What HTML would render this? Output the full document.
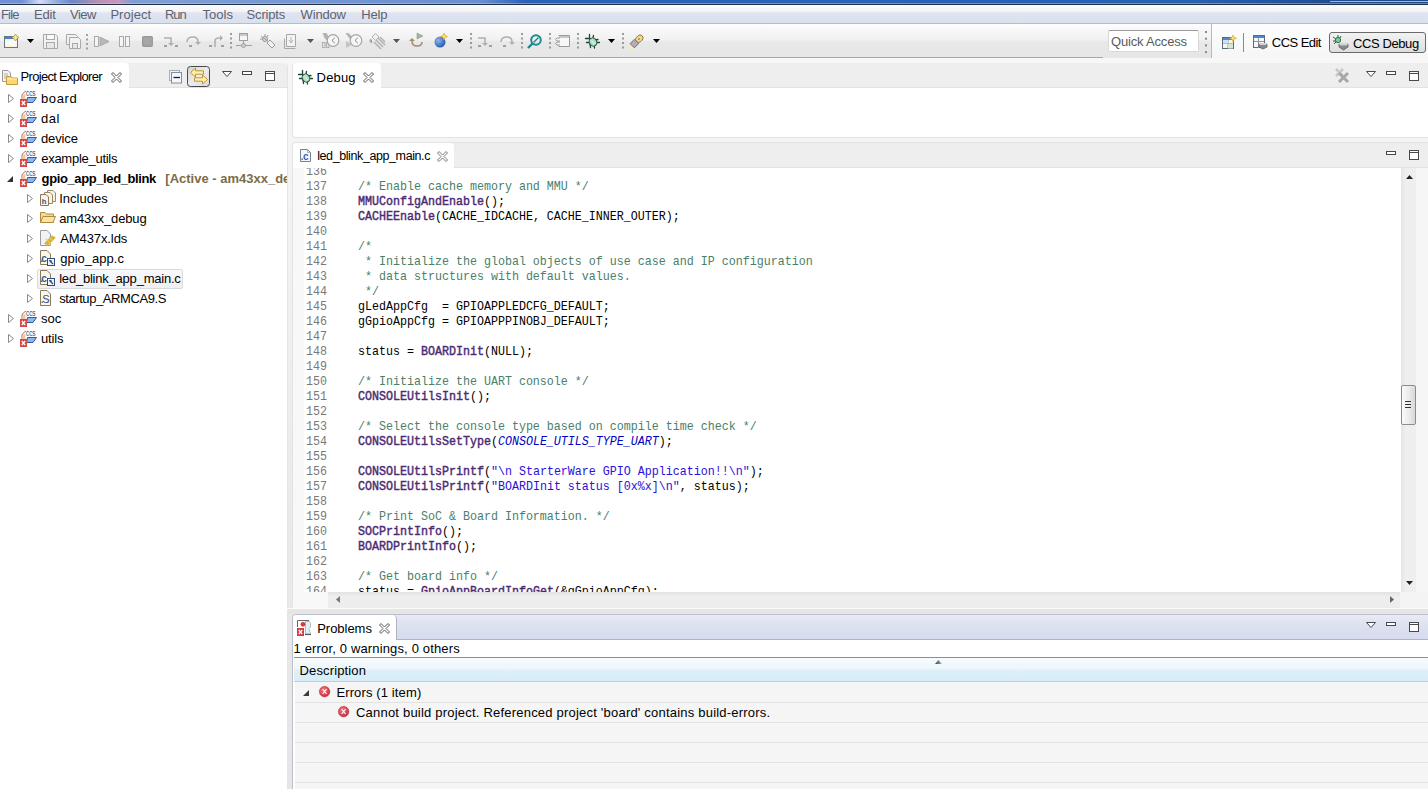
<!DOCTYPE html><html><head><meta charset="utf-8"><style>
*{margin:0;padding:0;box-sizing:border-box}
html,body{width:1428px;height:789px;overflow:hidden;background:linear-gradient(#f6f6f6 60px,#f0f0f0 300px,#eaeaea 500px,#e6e6e8 789px);font-family:"Liberation Sans",sans-serif;font-size:12px;color:#000}
.a{position:absolute}
.t{position:absolute;white-space:pre;line-height:1}
svg{overflow:visible}
#title{left:0;top:0;width:1428px;height:5px;background:linear-gradient(90deg,#6f90d2 0px,#6f90d2 22px,#d6ddf5 40px,#8aa6dc 58px,#6a88c8 72px,#b890b0 98px,#c898b8 118px,#7f9fd4 132px,#6a8fd0 480px,#2a62b6 525px,#2a60b0 1200px,#1f4e90 1330px,#1f4a88 1428px);border-bottom:1px solid #22304c}
#menu{left:0;top:5px;width:1428px;height:19px;background:linear-gradient(#fcfdfe,#f2f4f8 35%,#dfe4f0 45%,#d9e0ee);border-bottom:1px solid #b6bcc8}
#menu .t{top:4px;font-size:12.5px;color:#5c6070}
#tool{left:0;top:24px;width:1428px;height:34px;background:linear-gradient(#fefefe,#f7f7f7 18%,#f1f1f1 47%,#e8e8e8 53%,#e6e6e6)}
.panel{position:absolute;background:#fff;border:1px solid #e3e3e3}
.strip{position:absolute;left:0;top:0;right:0;height:25px;background:#eeeeee;border-bottom:1px solid #e2e2e2}
.tab{position:absolute;left:0;top:0;height:25px;background:#fff;border-radius:0 5px 0 0}
.code{position:absolute;font-family:"Liberation Mono",monospace;font-size:11.67px;white-space:pre;line-height:15px}
.ln{color:#787878}
.cm{color:#4a806a}
.fn{color:#4c2a74;-webkit-text-stroke:0.4px #4c2a74}
.st{color:#2a10dc}
.it{color:#0000c0;font-style:italic}
</style></head><body><div id="title" class="a"></div>
<div class="a" style="left:0;top:3px;width:1428px;height:1px;background:rgba(190,210,240,0.45)"></div>
<div class="a" style="left:1330px;top:1px;width:98px;height:1px;background:#a0b8d8"></div>
<div id="menu" class="a">
</div>
<div class="t" style="left:1.0px;top:8px;font-size:13px;font-weight:400;color:#5e6272;letter-spacing:-0.833px;">File</div>
<div class="t" style="left:34.0px;top:8px;font-size:13px;font-weight:400;color:#5e6272;letter-spacing:-0.167px;">Edit</div>
<div class="t" style="left:70.0px;top:8px;font-size:13px;font-weight:400;color:#5e6272;letter-spacing:-0.5px;">View</div>
<div class="t" style="left:110.4px;top:8px;font-size:13px;font-weight:400;color:#5e6272;letter-spacing:0.034px;">Project</div>
<div class="t" style="left:165.0px;top:8px;font-size:13px;font-weight:400;color:#5e6272;letter-spacing:-1.05px;">Run</div>
<div class="t" style="left:202.6px;top:8px;font-size:13px;font-weight:400;color:#5e6272;letter-spacing:0.0px;">Tools</div>
<div class="t" style="left:246.6px;top:8px;font-size:13px;font-weight:400;color:#5e6272;letter-spacing:-0.184px;">Scripts</div>
<div class="t" style="left:300.6px;top:8px;font-size:13px;font-weight:400;color:#5e6272;letter-spacing:-0.18px;">Window</div>
<div class="t" style="left:361.2px;top:8px;font-size:13px;font-weight:400;color:#5e6272;letter-spacing:-0.133px;">Help</div>
<div id="tool" class="a"></div>
<div class="a" style="left:0;top:57px;width:1103px;height:1px;background:#a8a8a8"></div>
<div class="a" style="left:0;top:58px;width:1428px;height:5px;background:#f7f7f7"></div>
<svg class="a" style="left:4px;top:34px" width="16" height="14" viewBox="0 0 16 14" ><defs><linearGradient id="ng" x1="0" y1="0" x2="0" y2="1"><stop offset="0" stop-color="#d8ecfc"/><stop offset="0.5" stop-color="#fbfbf4"/><stop offset="1" stop-color="#f8f4e0"/></linearGradient></defs><rect x="0.5" y="2.5" width="13" height="11" fill="url(#ng)" stroke="#6a7480"/><rect x="1" y="3" width="12" height="2" fill="#4a7ed0"/><path d="M11.5 0L12.8 2.2L15 3.5L12.8 4.8L11.5 7L10.2 4.8L8 3.5L10.2 2.2Z" fill="#ffe890" stroke="#b89a30" stroke-width="0.8"/></svg>
<svg class="a" style="left:27px;top:39px" width="7" height="4" viewBox="0 0 7 4" ><path d="M0 0H7L3.5 4Z" fill="#000"/></svg>
<svg class="a" style="left:43px;top:34px" width="15" height="15" viewBox="0 0 15 15" ><path d="M0.5 0.5H12.5L14.5 2.5V14.5H0.5Z" fill="#f2f2f2" stroke="#a8a8a8"/><rect x="3.5" y="0.5" width="8" height="5" fill="#fafafa" stroke="#a8a8a8"/><rect x="3.5" y="8.5" width="8" height="6" fill="#e6e6e6" stroke="#a8a8a8"/></svg>
<svg class="a" style="left:66px;top:34px" width="15" height="15" viewBox="0 0 15 15" ><path d="M0.5 0.5H9.5L11.5 2.5V10.5H0.5Z" fill="#f0f0f0" stroke="#a8a8a8"/><path d="M3.5 3.5H12.5L14.5 5.5V14.5H3.5Z" fill="#f2f2f2" stroke="#a8a8a8"/><rect x="6.5" y="9.5" width="5" height="5" fill="#e6e6e6" stroke="#a8a8a8"/></svg>
<svg class="a" style="left:86px;top:34px" width="2" height="15" viewBox="0 0 2 15" ><rect x="0" y="0" width="2" height="2" fill="#a0a0a0"/><rect x="0" y="4.5" width="2" height="2" fill="#a0a0a0"/><rect x="0" y="9.0" width="2" height="2" fill="#a0a0a0"/><rect x="0" y="13.5" width="2" height="2" fill="#a0a0a0"/></svg>
<svg class="a" style="left:94px;top:36px" width="15" height="11" viewBox="0 0 15 11" ><rect x="0.5" y="0.5" width="4" height="10" fill="#f4f4f4" stroke="#a9a9a9"/><path d="M6 1L15 5.5L6 10Z" fill="#b9b9b9" stroke="#a0a0a0" stroke-width="0.8"/></svg>
<svg class="a" style="left:119px;top:36px" width="11" height="11" viewBox="0 0 11 11" ><rect x="0.5" y="0.5" width="4" height="10" fill="#f4f4f4" stroke="#a9a9a9"/><rect x="6.5" y="0.5" width="4" height="10" fill="#f4f4f4" stroke="#a9a9a9"/></svg>
<svg class="a" style="left:142px;top:36px" width="11" height="11" viewBox="0 0 11 11" ><rect x="0.75" y="0.75" width="9.5" height="9.5" rx="1" fill="#a6a6a6" stroke="#9a9a9a" stroke-width="1.5"/></svg>
<svg class="a" style="left:163px;top:36px" width="15" height="11" viewBox="0 0 15 11" ><path d="M1 2H8V8" fill="none" stroke="#b0b0b0" stroke-width="1.6"/><path d="M5 7L8 10L11 7Z" fill="#b0b0b0"/><rect x="1" y="9" width="3" height="2" fill="#a0a0a0"/><rect x="12" y="9" width="3" height="2" fill="#a0a0a0"/></svg>
<svg class="a" style="left:186px;top:36px" width="15" height="11" viewBox="0 0 15 11" ><path d="M1 6Q1 1 7 1Q12 1 12 6" fill="none" stroke="#b0b0b0" stroke-width="1.6"/><path d="M9 6L12 9L15 6Z" fill="#b0b0b0"/><rect x="3" y="9" width="3" height="2" fill="#a0a0a0"/></svg>
<svg class="a" style="left:209px;top:36px" width="15" height="11" viewBox="0 0 15 11" ><path d="M6 11V5Q6 2 10 2H12" fill="none" stroke="#b0b0b0" stroke-width="1.6"/><path d="M11 -1L14 2L11 5Z" fill="#b0b0b0"/><rect x="0" y="9" width="3" height="2" fill="#a0a0a0"/><rect x="12" y="9" width="3" height="2" fill="#a0a0a0"/></svg>
<svg class="a" style="left:230px;top:33px" width="2" height="16" viewBox="0 0 2 16" ><rect x="0" y="0" width="2" height="2" fill="#9a9a9a"/><rect x="0" y="4.5" width="2" height="2" fill="#9a9a9a"/><rect x="0" y="9.0" width="2" height="2" fill="#9a9a9a"/><rect x="0" y="13.5" width="2" height="2" fill="#9a9a9a"/></svg>
<svg class="a" style="left:236px;top:33px" width="16" height="15" viewBox="0 0 16 15" ><rect x="3.5" y="0.5" width="8" height="7" fill="#f6f6f6" stroke="#a0a0a0"/><rect x="4" y="1" width="7" height="2" fill="#c8c8c8"/><path d="M7.5 8V11" stroke="#a0a0a0"/><path d="M0 12.5H16" stroke="#a0a0a0"/><circle cx="7.5" cy="12.5" r="2" fill="#d0d0d0" stroke="#a0a0a0"/></svg>
<svg class="a" style="left:260px;top:34px" width="16" height="15" viewBox="0 0 16 15" ><circle cx="5" cy="5" r="2.5" fill="#d8d8d8" stroke="#9c9c9c"/><path d="M1 2L9 8M0 5H3M5 0V2M8 1L7 3" stroke="#9c9c9c"/><path d="M7 9L10 6L15 11L12 14Z" fill="#f0f0f0" stroke="#9c9c9c"/></svg>
<svg class="a" style="left:284px;top:34px" width="14" height="15" viewBox="0 0 14 15" ><path d="M2.5 0.5H11.5V12.5H2.5Z" fill="#f3f3f3" stroke="#a8a8a8"/><path d="M0.5 4.5V14.5H11.5" fill="none" stroke="#a8a8a8"/><path d="M7 3V9M5 6L7 9L9 6" fill="none" stroke="#b8b8b8"/></svg>
<svg class="a" style="left:307px;top:39px" width="7" height="4" viewBox="0 0 7 4" ><path d="M0 0H7L3.5 4Z" fill="#555"/></svg>
<svg class="a" style="left:322px;top:33px" width="17" height="16" viewBox="0 0 17 16" ><path d="M0.5 0H4.5L7.5 5L5 7.5L2.5 5Z" fill="#b4b4b4"/><rect x="0.5" y="9.5" width="2.5" height="5" fill="#e4e4e4" stroke="#b0b0b0"/><rect x="4.5" y="9.5" width="2.5" height="5" fill="#e4e4e4" stroke="#b0b0b0"/><circle cx="11" cy="7.5" r="5.8" fill="#f6f6f6" stroke="#a6a6a6" stroke-width="1.2"/><path d="M12.8 4.8L10 7.5L12.8 10.2" fill="none" stroke="#7a7a7a" stroke-width="0.9"/></svg>
<svg class="a" style="left:345px;top:33px" width="17" height="16" viewBox="0 0 17 16" ><path d="M0.5 0H3.5L8.5 5L6 7.5Z" fill="#b4b4b4"/><path d="M1 8L7.5 11.5L1 15Z" fill="#c4c4c4"/><circle cx="11" cy="7.5" r="5.8" fill="#f6f6f6" stroke="#a6a6a6" stroke-width="1.2"/><path d="M12.8 4.8L10 7.5L12.8 10.2" fill="none" stroke="#7a7a7a" stroke-width="0.9"/></svg>
<svg class="a" style="left:369px;top:33px" width="17" height="17" viewBox="0 0 17 17" ><path d="M6.5 0.5L10 4L6.5 7.5L3 4Z" fill="#f0f0f0" stroke="#b4b4b4"/><path d="M2 6L1 8L3 10M5 9L12 16M7 7L14 14M9 5L16 12M11 4L16 9" stroke="#b2b2b2" stroke-width="1.6"/></svg>
<svg class="a" style="left:393px;top:39px" width="7" height="4" viewBox="0 0 7 4" ><path d="M0 0H7L3.5 4Z" fill="#555"/></svg>
<svg class="a" style="left:409px;top:33px" width="15" height="15" viewBox="0 0 15 15" ><path d="M3 8Q3 13 8 13Q13 13 13 9" fill="none" stroke="#a09070" stroke-width="1.6"/><path d="M0 8L3 5L6 8Z" fill="#a09070"/><path d="M8 0L14 3L8 6Z" fill="#9cb89c" stroke="#8aa08a" stroke-width="0.6"/></svg>
<svg class="a" style="left:434px;top:33px" width="14" height="15" viewBox="0 0 14 15" ><defs><radialGradient id="bb" cx="0.35" cy="0.35" r="0.7"><stop offset="0" stop-color="#8fb4ef"/><stop offset="1" stop-color="#2458b0"/></radialGradient></defs><circle cx="6" cy="9" r="5.5" fill="url(#bb)"/><path d="M10 0L11 2.5L13.5 3.5L11 4.5L10 7L9 4.5L6.5 3.5L9 2.5Z" fill="#ffe36a" stroke="#c8a020" stroke-width="0.6"/></svg>
<svg class="a" style="left:456px;top:39px" width="7" height="4" viewBox="0 0 7 4" ><path d="M0 0H7L3.5 4Z" fill="#000"/></svg>
<svg class="a" style="left:470px;top:33px" width="2" height="16" viewBox="0 0 2 16" ><rect x="0" y="0" width="2" height="2" fill="#9a9a9a"/><rect x="0" y="4.5" width="2" height="2" fill="#9a9a9a"/><rect x="0" y="9.0" width="2" height="2" fill="#9a9a9a"/><rect x="0" y="13.5" width="2" height="2" fill="#9a9a9a"/></svg>
<svg class="a" style="left:477px;top:36px" width="15" height="11" viewBox="0 0 15 11" ><path d="M1 2H8V8" fill="none" stroke="#b0b0b0" stroke-width="1.6"/><path d="M5 7L8 10L11 7Z" fill="#b0b0b0"/><rect x="1" y="9" width="3" height="2" fill="#a0a0a0"/><rect x="12" y="9" width="3" height="2" fill="#a0a0a0"/></svg>
<svg class="a" style="left:500px;top:36px" width="15" height="11" viewBox="0 0 15 11" ><path d="M1 6Q1 1 7 1Q12 1 12 6" fill="none" stroke="#b0b0b0" stroke-width="1.6"/><path d="M9 6L12 9L15 6Z" fill="#b0b0b0"/><rect x="3" y="9" width="3" height="2" fill="#a0a0a0"/></svg>
<svg class="a" style="left:521px;top:33px" width="2" height="16" viewBox="0 0 2 16" ><rect x="0" y="0" width="2" height="2" fill="#9a9a9a"/><rect x="0" y="4.5" width="2" height="2" fill="#9a9a9a"/><rect x="0" y="9.0" width="2" height="2" fill="#9a9a9a"/><rect x="0" y="13.5" width="2" height="2" fill="#9a9a9a"/></svg>
<svg class="a" style="left:527px;top:34px" width="15" height="15" viewBox="0 0 15 15" ><circle cx="9" cy="6" r="4.8" fill="none" stroke="#1c8a90" stroke-width="2"/><path d="M6.5 8.5L11.5 3.5" stroke="#1c8a90" stroke-width="1.5"/><path d="M5.5 9.5L1 14" stroke="#1c8a90" stroke-width="2.4"/></svg>
<svg class="a" style="left:549px;top:33px" width="2" height="16" viewBox="0 0 2 16" ><rect x="0" y="0" width="2" height="2" fill="#9a9a9a"/><rect x="0" y="4.5" width="2" height="2" fill="#9a9a9a"/><rect x="0" y="9.0" width="2" height="2" fill="#9a9a9a"/><rect x="0" y="13.5" width="2" height="2" fill="#9a9a9a"/></svg>
<svg class="a" style="left:555px;top:35px" width="15" height="12" viewBox="0 0 15 12" ><path d="M3.5 0.5H14.5V11.5H3.5" fill="#f8f8f8" stroke="#9a9a9a"/><path d="M4 2H14" stroke="#9a9a9a"/><path d="M5 3H2L0.5 4.5L2 6H5M5 7H2L0.5 8.5L2 10H5" fill="none" stroke="#9a9a9a"/></svg>
<svg class="a" style="left:577px;top:33px" width="2" height="16" viewBox="0 0 2 16" ><rect x="0" y="0" width="2" height="2" fill="#9a9a9a"/><rect x="0" y="4.5" width="2" height="2" fill="#9a9a9a"/><rect x="0" y="9.0" width="2" height="2" fill="#9a9a9a"/><rect x="0" y="13.5" width="2" height="2" fill="#9a9a9a"/></svg>
<svg class="a" style="left:585px;top:34px" width="16" height="16" viewBox="0 0 16 16" ><g stroke="#1e4636" stroke-width="1.3" stroke-linecap="round" fill="none"><path d="M0.5 4.5H4.5L6 6M1.5 8.5H4.5M5 10L5.5 13.5M9 10.5L9.5 14M10.5 8.5H14.5M10 6L13 5.5M4.5 0.5V4.5M8.5 1.5L8 4"/></g><ellipse cx="8" cy="8" rx="3.6" ry="4.2" transform="rotate(-35 8 8)" fill="#b4e2c4" stroke="#2a5a48" stroke-width="1.1"/><path d="M6.5 6.5L9.5 10" stroke="#e8f8ee" stroke-width="1"/></svg>
<svg class="a" style="left:608px;top:39px" width="7" height="4" viewBox="0 0 7 4" ><path d="M0 0H7L3.5 4Z" fill="#000"/></svg>
<svg class="a" style="left:622px;top:33px" width="2" height="16" viewBox="0 0 2 16" ><rect x="0" y="0" width="2" height="2" fill="#9a9a9a"/><rect x="0" y="4.5" width="2" height="2" fill="#9a9a9a"/><rect x="0" y="9.0" width="2" height="2" fill="#9a9a9a"/><rect x="0" y="13.5" width="2" height="2" fill="#9a9a9a"/></svg>
<svg class="a" style="left:627px;top:34px" width="19" height="15" viewBox="0 0 19 15" ><g transform="rotate(-45 9.5 7.5)"><path d="M4 4.5L-3.5 7.5L4 10.5Z" fill="#f4f0b4"/><rect x="3.5" y="4.5" width="6" height="6" fill="#b8a8c0" stroke="#6a5a60" stroke-width="0.8"/><rect x="9.5" y="4.5" width="8" height="6" rx="3" fill="#f2d888" stroke="#7a6a40" stroke-width="0.8"/><circle cx="13" cy="7.5" r="0.8" fill="#6a5a30"/></g></svg>
<svg class="a" style="left:653px;top:39px" width="7" height="4" viewBox="0 0 7 4" ><path d="M0 0H7L3.5 4Z" fill="#000"/></svg>
<div class="a" style="left:1108px;top:30px;width:91px;height:22px;background:#fff;border:1px solid #d8d8d8;border-top-color:#9a9a9a;border-radius:2px"></div>
<div class="t" style="left:1111.0px;top:35px;font-size:13px;font-weight:400;color:#5a5a5a;letter-spacing:-0.182px;">Quick Access</div>
<svg class="a" style="left:1205px;top:31px" width="2" height="22" viewBox="0 0 2 22" ><rect x="0" y="0" width="2" height="2" fill="#8a8a8a"/><rect x="0" y="6.700000000000003" width="2" height="2" fill="#8a8a8a"/><rect x="0" y="13.400000000000006" width="2" height="2" fill="#8a8a8a"/><rect x="0" y="20.10000000000001" width="2" height="2" fill="#8a8a8a"/></svg>
<div class="a" style="left:1211px;top:24px;width:1px;height:34px;background:#b8b8b8"></div>
<div class="a" style="left:1212px;top:24px;width:216px;height:34px;background:linear-gradient(#fdfdfd,#f6f6f6)"></div>
<svg class="a" style="left:1222px;top:35px" width="15" height="14" viewBox="0 0 15 14" ><rect x="0.5" y="2.5" width="11" height="11" fill="#f4f4f0" stroke="#5d6a78"/><rect x="1" y="3" width="10" height="2" fill="#4e86d0"/><path d="M1 8.5H11M6 5V13" stroke="#8a96a4"/><rect x="1" y="5" width="5" height="3.5" fill="#cfe0f4"/><rect x="6" y="8.5" width="5" height="5" fill="#d8e8d0"/><path d="M11 0L12 2.3L14.5 3.3L12 4.3L11 6.6L10 4.3L7.5 3.3L10 2.3Z" fill="#ffe36a" stroke="#c8a020" stroke-width="0.6"/></svg>
<div class="a" style="left:1243px;top:33px;width:1px;height:19px;background:#8a8a8a"></div>
<svg class="a" style="left:1253px;top:35px" width="15" height="15" viewBox="0 0 15 15" ><rect x="0.5" y="0.5" width="11" height="12" fill="#f6f6f6" stroke="#5d6a78"/><rect x="1" y="1" width="10" height="2" fill="#4e86d0"/><path d="M1 6.5H11M5.5 3V13" stroke="#8a96a4"/><path d="M6 9H14V12L10 14L6 12Z" fill="#8a8a8a" stroke="#5a5a5a" stroke-width="0.8"/><rect x="6.5" y="8" width="7" height="2" fill="#d0d0d0"/></svg>
<div class="t" style="left:1271.8px;top:36px;font-size:13px;font-weight:400;color:#000;letter-spacing:-0.543px;">CCS Edit</div>
<div class="a" style="left:1329px;top:32px;width:97px;height:21px;border:1px solid #6a6a6a;border-radius:3px;background:linear-gradient(#f2f2f2,#dedede)"></div>
<svg class="a" style="left:1333px;top:35px" width="16" height="16" viewBox="0 0 16 16" ><g stroke="#2e5e44" stroke-width="1"><path d="M0 2L3 4M0 6H3M5 0V3M8 1L7 3M1 9L3 7M8 6L6 5"/></g><circle cx="5" cy="5" r="2.6" fill="#7fd090" stroke="#2e6e4e"/><path d="M6 9H15V12L10.5 15L6 12Z" fill="#8a8a8a" stroke="#5a5a5a" stroke-width="0.8"/><rect x="6.5" y="8" width="8" height="2.4" fill="#d4d4d4"/></svg>
<div class="t" style="left:1353.0px;top:37px;font-size:13px;font-weight:400;color:#000;letter-spacing:-0.4px;">CCS Debug</div>
<div class="panel" style="left:-1px;top:63px;width:289px;height:727px;border-top:0;border-radius:0 4px 0 0">
<div class="strip" style="border-radius:0 4px 0 0"></div><div class="tab" style="width:129px;border-radius:0 4px 0 0"></div>
</div>
<div class="t" style="left:20.6px;top:70px;font-size:13px;font-weight:400;color:#000;letter-spacing:-0.7px;">Project Explorer</div>
<svg class="a" style="left:2px;top:70px" width="16" height="15" viewBox="0 0 16 15" ><path d="M0.5 0.5H6L8.5 3V11.5H0.5Z" fill="#f4f4f4" stroke="#9a9a9a"/><path d="M2 4H6M2 6H6M2 8H5" stroke="#b0b0b0"/><path d="M4.5 6.5H9L10 8H15.5V14.5H4.5Z" fill="#fbd774" stroke="#c89a40"/><path d="M5 9H15" stroke="#fff2c0"/></svg>
<svg class="a" style="left:111px;top:72px" width="11" height="11" viewBox="0 0 11 11" ><path d="M0.5 2L2 0.5L5.5 4L9 0.5L10.5 2L7 5.5L10.5 9L9 10.5L5.5 7L2 10.5L0.5 9L4 5.5Z" fill="#fff" stroke="#5a5a5a" stroke-width="1" stroke-linejoin="round"/></svg>
<svg class="a" style="left:169px;top:70px" width="14" height="14" viewBox="0 0 14 14" ><rect x="0.5" y="0.5" width="10" height="10" fill="#eef4fa" stroke="#a4b0bc"/><rect x="2.5" y="2.5" width="10" height="10.5" fill="#f2f8fd" stroke="#848e98"/><path d="M4.5 7.5H11" stroke="#10202c" stroke-width="1.3"/></svg>
<svg class="a" style="left:187px;top:66px" width="23" height="21" viewBox="0 0 23 21" ><defs><linearGradient id="lk" x1="0" y1="0" x2="1" y2="1"><stop offset="0" stop-color="#d4d4d4"/><stop offset="0.5" stop-color="#ececf0"/><stop offset="1" stop-color="#d8d8e2"/></linearGradient></defs><rect x="0.5" y="0.5" width="22" height="20" rx="3" fill="url(#lk)" stroke="#484848"/><path d="M3.5 6.5L8.5 2V4.8H16.5V8.2H8.5V11Z" fill="#fff0a8" stroke="#b88c28" stroke-width="0.9"/><path d="M20.5 13.5L15.5 9V11.8H7.5V15.2H15.5V18Z" fill="#fff0a8" stroke="#b88c28" stroke-width="0.9"/></svg>
<svg class="a" style="left:222px;top:71px" width="10" height="6" viewBox="0 0 10 6" ><path d="M0.5 0.5H9.5L5 5.5Z" fill="#fff" stroke="#4a4a4a"/></svg>
<svg class="a" style="left:242px;top:71px" width="10" height="5" viewBox="0 0 10 5" ><rect x="0.5" y="0.5" width="9" height="3" fill="#fff" stroke="#484848"/></svg>
<svg class="a" style="left:265px;top:71px" width="10" height="10" viewBox="0 0 10 10" ><rect x="0.5" y="0.5" width="9" height="9" fill="#fff" stroke="#484848"/><path d="M0.5 2.5H9.5" stroke="#484848"/></svg>
<div class="a" style="left:37px;top:269px;width:146px;height:20px;border:1px solid #d6d9de;border-radius:2px;background:linear-gradient(#f8f9fb,#eef0f3)"></div>
<svg class="a" style="left:8px;top:94px" width="6" height="9" viewBox="0 0 6 9" ><path d="M0.5 0.5L5.5 4.5L0.5 8.5Z" fill="#fff" stroke="#8a8a8a"/></svg>
<svg class="a" style="left:20px;top:91px" width="17" height="16" viewBox="0 0 17 16" ><path d="M2 9V4Q3 1.5 6 0" fill="none" stroke="#8a6a4a" stroke-width="0.9"/><path d="M2.5 5Q3.5 3 5.5 2.5V8.5H2.5Z" fill="#f6c89a"/><text x="6" y="5.2" font-family="Liberation Sans" font-size="9" fill="#1f3f6f" textLength="9.5" lengthAdjust="spacingAndGlyphs">ccs</text><path d="M7.5 6.5H16.5L13 11.5H6.5Z" fill="#8cb8ee" stroke="#34589a" stroke-width="1"/><rect x="0" y="8" width="7" height="8" fill="#d64848"/><path d="M1.8 10L5.2 14M5.2 10L1.8 14" stroke="#fff" stroke-width="1.2"/></svg>
<svg class="a" style="left:8px;top:114px" width="6" height="9" viewBox="0 0 6 9" ><path d="M0.5 0.5L5.5 4.5L0.5 8.5Z" fill="#fff" stroke="#8a8a8a"/></svg>
<svg class="a" style="left:20px;top:111px" width="17" height="16" viewBox="0 0 17 16" ><path d="M2 9V4Q3 1.5 6 0" fill="none" stroke="#8a6a4a" stroke-width="0.9"/><path d="M2.5 5Q3.5 3 5.5 2.5V8.5H2.5Z" fill="#f6c89a"/><text x="6" y="5.2" font-family="Liberation Sans" font-size="9" fill="#1f3f6f" textLength="9.5" lengthAdjust="spacingAndGlyphs">ccs</text><path d="M7.5 6.5H16.5L13 11.5H6.5Z" fill="#8cb8ee" stroke="#34589a" stroke-width="1"/><rect x="0" y="8" width="7" height="8" fill="#d64848"/><path d="M1.8 10L5.2 14M5.2 10L1.8 14" stroke="#fff" stroke-width="1.2"/></svg>
<svg class="a" style="left:8px;top:134px" width="6" height="9" viewBox="0 0 6 9" ><path d="M0.5 0.5L5.5 4.5L0.5 8.5Z" fill="#fff" stroke="#8a8a8a"/></svg>
<svg class="a" style="left:20px;top:131px" width="17" height="16" viewBox="0 0 17 16" ><path d="M2 9V4Q3 1.5 6 0" fill="none" stroke="#8a6a4a" stroke-width="0.9"/><path d="M2.5 5Q3.5 3 5.5 2.5V8.5H2.5Z" fill="#f6c89a"/><text x="6" y="5.2" font-family="Liberation Sans" font-size="9" fill="#1f3f6f" textLength="9.5" lengthAdjust="spacingAndGlyphs">ccs</text><path d="M7.5 6.5H16.5L13 11.5H6.5Z" fill="#8cb8ee" stroke="#34589a" stroke-width="1"/><rect x="0" y="8" width="7" height="8" fill="#d64848"/><path d="M1.8 10L5.2 14M5.2 10L1.8 14" stroke="#fff" stroke-width="1.2"/></svg>
<svg class="a" style="left:8px;top:154px" width="6" height="9" viewBox="0 0 6 9" ><path d="M0.5 0.5L5.5 4.5L0.5 8.5Z" fill="#fff" stroke="#8a8a8a"/></svg>
<svg class="a" style="left:20px;top:151px" width="17" height="16" viewBox="0 0 17 16" ><path d="M2 9V4Q3 1.5 6 0" fill="none" stroke="#8a6a4a" stroke-width="0.9"/><path d="M2.5 5Q3.5 3 5.5 2.5V8.5H2.5Z" fill="#f6c89a"/><text x="6" y="5.2" font-family="Liberation Sans" font-size="9" fill="#1f3f6f" textLength="9.5" lengthAdjust="spacingAndGlyphs">ccs</text><path d="M7.5 6.5H16.5L13 11.5H6.5Z" fill="#8cb8ee" stroke="#34589a" stroke-width="1"/><rect x="0" y="8" width="7" height="8" fill="#d64848"/><path d="M1.8 10L5.2 14M5.2 10L1.8 14" stroke="#fff" stroke-width="1.2"/></svg>
<svg class="a" style="left:7px;top:176px" width="6" height="6" viewBox="0 0 6 6" ><path d="M6 0V6H0Z" fill="#333"/></svg>
<svg class="a" style="left:20px;top:171px" width="17" height="16" viewBox="0 0 17 16" ><path d="M2 9V4Q3 1.5 6 0" fill="none" stroke="#8a6a4a" stroke-width="0.9"/><path d="M2.5 5Q3.5 3 5.5 2.5V8.5H2.5Z" fill="#f6c89a"/><text x="6" y="5.2" font-family="Liberation Sans" font-size="9" fill="#1f3f6f" textLength="9.5" lengthAdjust="spacingAndGlyphs">ccs</text><path d="M7.5 6.5H16.5L13 11.5H6.5Z" fill="#8cb8ee" stroke="#34589a" stroke-width="1"/><rect x="0" y="8" width="7" height="8" fill="#d64848"/><path d="M1.8 10L5.2 14M5.2 10L1.8 14" stroke="#fff" stroke-width="1.2"/></svg>
<svg class="a" style="left:27px;top:194px" width="6" height="9" viewBox="0 0 6 9" ><path d="M0.5 0.5L5.5 4.5L0.5 8.5Z" fill="#fff" stroke="#8a8a8a"/></svg>
<svg class="a" style="left:40px;top:190px" width="16" height="16" viewBox="0 0 16 16" ><path d="M7.5 0.5H13L15.5 3V11.5H7.5Z" fill="#fbf3e0" stroke="#9a8a6a"/><path d="M4.5 2.5H10L12.5 5V13.5H4.5Z" fill="#fbf3e0" stroke="#9a8a6a"/><path d="M0.5 4.5H6L8.5 7V15.5H0.5Z" fill="#f8f4ea" stroke="#8a7a5a"/><text x="1.8" y="14" font-family="Liberation Sans" font-size="7.5" font-weight="bold" fill="#2e4e7e">h</text></svg>
<svg class="a" style="left:27px;top:214px" width="6" height="9" viewBox="0 0 6 9" ><path d="M0.5 0.5L5.5 4.5L0.5 8.5Z" fill="#fff" stroke="#8a8a8a"/></svg>
<svg class="a" style="left:40px;top:210px" width="16" height="14" viewBox="0 0 16 14" ><path d="M0.5 2.5H5L6.5 4H13.5V12.5H0.5Z" fill="#f6d890" stroke="#b08a40"/><path d="M0.5 12.5L3 6.5H15.5L13 12.5Z" fill="#fce4a0" stroke="#b08a40"/></svg>
<svg class="a" style="left:27px;top:234px" width="6" height="9" viewBox="0 0 6 9" ><path d="M0.5 0.5L5.5 4.5L0.5 8.5Z" fill="#fff" stroke="#8a8a8a"/></svg>
<svg class="a" style="left:40px;top:230px" width="16" height="16" viewBox="0 0 16 16" ><path d="M0.5 0.5H7L10.5 4V15.5H0.5Z" fill="#f0f2f8" stroke="#9a9a9a"/><path d="M5 14L13 6M7 15L15 7" stroke="#d8b030" stroke-width="2"/><path d="M6 9L11 14M9 7L13 11" stroke="#e8c850" stroke-width="1.2"/></svg>
<svg class="a" style="left:27px;top:254px" width="6" height="9" viewBox="0 0 6 9" ><path d="M0.5 0.5L5.5 4.5L0.5 8.5Z" fill="#fff" stroke="#8a8a8a"/></svg>
<svg class="a" style="left:40px;top:250px" width="15" height="16" viewBox="0 0 15 16" ><path d="M0.5 0.5H7L10.5 4V14.5H0.5Z" fill="#fbf6e8" stroke="#8a7a5a"/><text x="1.2" y="12" font-family="Liberation Sans" font-size="10" font-weight="bold" fill="#2e5e9e">c</text><rect x="1" y="10.5" width="1.4" height="1.4" fill="#2e5e9e"/><rect x="7.5" y="8.5" width="7" height="7" fill="#eef2f8" stroke="#2e4e7e"/><path d="M9.5 10.5L13 14" stroke="#2e4e7e" stroke-width="1.3"/><path d="M9 10H11.5V12.5Z" fill="#2e4e7e"/></svg>
<svg class="a" style="left:27px;top:274px" width="6" height="9" viewBox="0 0 6 9" ><path d="M0.5 0.5L5.5 4.5L0.5 8.5Z" fill="#fff" stroke="#8a8a8a"/></svg>
<svg class="a" style="left:40px;top:270px" width="15" height="16" viewBox="0 0 15 16" ><path d="M0.5 0.5H7L10.5 4V14.5H0.5Z" fill="#fbf6e8" stroke="#8a7a5a"/><text x="1.2" y="12" font-family="Liberation Sans" font-size="10" font-weight="bold" fill="#2e5e9e">c</text><rect x="1" y="10.5" width="1.4" height="1.4" fill="#2e5e9e"/><rect x="7.5" y="8.5" width="7" height="7" fill="#eef2f8" stroke="#2e4e7e"/><path d="M9.5 10.5L13 14" stroke="#2e4e7e" stroke-width="1.3"/><path d="M9 10H11.5V12.5Z" fill="#2e4e7e"/></svg>
<svg class="a" style="left:27px;top:294px" width="6" height="9" viewBox="0 0 6 9" ><path d="M0.5 0.5L5.5 4.5L0.5 8.5Z" fill="#fff" stroke="#8a8a8a"/></svg>
<svg class="a" style="left:40px;top:290px" width="12" height="16" viewBox="0 0 12 16" ><path d="M0.5 0.5H7L10.5 4V15.5H0.5Z" fill="#fbf6e8" stroke="#8a7a5a"/><text x="2.3" y="13" font-family="Liberation Sans" font-size="11" fill="#2e4e8e">S</text><rect x="1.5" y="11.5" width="1.3" height="1.3" fill="#2e4e8e"/></svg>
<svg class="a" style="left:8px;top:314px" width="6" height="9" viewBox="0 0 6 9" ><path d="M0.5 0.5L5.5 4.5L0.5 8.5Z" fill="#fff" stroke="#8a8a8a"/></svg>
<svg class="a" style="left:20px;top:311px" width="17" height="16" viewBox="0 0 17 16" ><path d="M2 9V4Q3 1.5 6 0" fill="none" stroke="#8a6a4a" stroke-width="0.9"/><path d="M2.5 5Q3.5 3 5.5 2.5V8.5H2.5Z" fill="#f6c89a"/><text x="6" y="5.2" font-family="Liberation Sans" font-size="9" fill="#1f3f6f" textLength="9.5" lengthAdjust="spacingAndGlyphs">ccs</text><path d="M7.5 6.5H16.5L13 11.5H6.5Z" fill="#8cb8ee" stroke="#34589a" stroke-width="1"/><rect x="0" y="8" width="7" height="8" fill="#d64848"/><path d="M1.8 10L5.2 14M5.2 10L1.8 14" stroke="#fff" stroke-width="1.2"/></svg>
<svg class="a" style="left:8px;top:334px" width="6" height="9" viewBox="0 0 6 9" ><path d="M0.5 0.5L5.5 4.5L0.5 8.5Z" fill="#fff" stroke="#8a8a8a"/></svg>
<svg class="a" style="left:20px;top:331px" width="17" height="16" viewBox="0 0 17 16" ><path d="M2 9V4Q3 1.5 6 0" fill="none" stroke="#8a6a4a" stroke-width="0.9"/><path d="M2.5 5Q3.5 3 5.5 2.5V8.5H2.5Z" fill="#f6c89a"/><text x="6" y="5.2" font-family="Liberation Sans" font-size="9" fill="#1f3f6f" textLength="9.5" lengthAdjust="spacingAndGlyphs">ccs</text><path d="M7.5 6.5H16.5L13 11.5H6.5Z" fill="#8cb8ee" stroke="#34589a" stroke-width="1"/><rect x="0" y="8" width="7" height="8" fill="#d64848"/><path d="M1.8 10L5.2 14M5.2 10L1.8 14" stroke="#fff" stroke-width="1.2"/></svg>
<div class="t" style="left:41.0px;top:92px;font-size:13px;font-weight:400;color:#000;letter-spacing:0.6px;">board</div>
<div class="t" style="left:41.0px;top:112px;font-size:13px;font-weight:400;color:#000;letter-spacing:0.5px;">dal</div>
<div class="t" style="left:41.0px;top:132px;font-size:13px;font-weight:400;color:#000;letter-spacing:-0.14px;">device</div>
<div class="t" style="left:41.2px;top:152px;font-size:13px;font-weight:400;color:#000;letter-spacing:-0.266px;">example_utils</div>
<div class="t" style="left:41.6px;top:172px;font-size:13px;font-weight:700;color:#000;letter-spacing:-0.389px;">gpio_app_led_blink</div>
<div class="t" style="left:59.2px;top:192px;font-size:13px;font-weight:400;color:#000;letter-spacing:0.028px;">Includes</div>
<div class="t" style="left:59.2px;top:212px;font-size:13px;font-weight:400;color:#000;letter-spacing:-0.128px;">am43xx_debug</div>
<div class="t" style="left:60.2px;top:232px;font-size:13px;font-weight:400;color:#000;letter-spacing:-0.09px;">AM437x.lds</div>
<div class="t" style="left:60.2px;top:252px;font-size:13px;font-weight:400;color:#000;letter-spacing:0.021px;">gpio_app.c</div>
<div class="t" style="left:59.2px;top:272px;font-size:13px;font-weight:400;color:#000;letter-spacing:-0.215px;">led_blink_app_main.c</div>
<div class="t" style="left:59.2px;top:292px;font-size:13px;font-weight:400;color:#000;letter-spacing:-0.42px;">startup_ARMCA9.S</div>
<div class="t" style="left:41.0px;top:312px;font-size:13px;font-weight:400;color:#000;letter-spacing:-0.05px;">soc</div>
<div class="t" style="left:41.0px;top:332px;font-size:13px;font-weight:400;color:#000;letter-spacing:-0.15px;">utils</div>
<div class="a" style="left:0;top:160px;width:287px;height:30px;overflow:hidden"><div class="t" style="left:165.3px;top:12px;font-size:13px;font-weight:700;color:#7d6c48;letter-spacing:0.0px;">[Active - am43xx_debug]</div></div>
<div class="panel" style="left:292px;top:63px;width:1137px;height:75px;border-top:0;border-radius:4px 0 0 4px">
<div class="strip" style="border-radius:4px 0 0 0"></div><div class="tab" style="width:88px;border-radius:4px 4px 0 0"></div>
</div>
<div class="t" style="left:316.6px;top:71px;font-size:13px;font-weight:400;color:#000;letter-spacing:0.15px;">Debug</div>
<svg class="a" style="left:298px;top:70px" width="16" height="16" viewBox="0 0 16 16" ><g stroke="#1e4636" stroke-width="1.3" stroke-linecap="round" fill="none"><path d="M0.5 4.5H4.5L6 6M1.5 8.5H4.5M5 10L5.5 13.5M9 10.5L9.5 14M10.5 8.5H14.5M10 6L13 5.5M4.5 0.5V4.5M8.5 1.5L8 4"/></g><ellipse cx="8" cy="8" rx="3.6" ry="4.2" transform="rotate(-35 8 8)" fill="#b4e2c4" stroke="#2a5a48" stroke-width="1.1"/><path d="M6.5 6.5L9.5 10" stroke="#e8f8ee" stroke-width="1"/></svg>
<svg class="a" style="left:363px;top:72px" width="11" height="11" viewBox="0 0 11 11" ><path d="M0.5 2L2 0.5L5.5 4L9 0.5L10.5 2L7 5.5L10.5 9L9 10.5L5.5 7L2 10.5L0.5 9L4 5.5Z" fill="#fff" stroke="#5a5a5a" stroke-width="1" stroke-linejoin="round"/></svg>
<svg class="a" style="left:1334px;top:67px" width="16" height="16" viewBox="0 0 16 16" ><path d="M2 2L9 9M9 2L2 9" stroke="#c8c8c8" stroke-width="2.5"/><path d="M5 6L14 15M14 6L5 15" stroke="#a8a8a8" stroke-width="3"/></svg>
<svg class="a" style="left:1366px;top:71px" width="10" height="6" viewBox="0 0 10 6" ><path d="M0.5 0.5H9.5L5 5.5Z" fill="#fff" stroke="#4a4a4a"/></svg>
<svg class="a" style="left:1386px;top:71px" width="10" height="5" viewBox="0 0 10 5" ><rect x="0.5" y="0.5" width="9" height="3" fill="#fff" stroke="#484848"/></svg>
<svg class="a" style="left:1409px;top:71px" width="10" height="10" viewBox="0 0 10 10" ><rect x="0.5" y="0.5" width="9" height="9" fill="#fff" stroke="#484848"/><path d="M0.5 2.5H9.5" stroke="#484848"/></svg>
<div class="panel" style="left:292px;top:142px;width:1137px;height:467px;border-radius:4px 0 0 4px">
<div class="strip" style="border-radius:4px 0 0 0"></div><div class="tab" style="width:161px;border-radius:4px 4px 0 0"></div>
</div>
<div class="t" style="left:317.2px;top:150px;font-size:12.5px;font-weight:400;color:#000;letter-spacing:-0.405px;">led_blink_app_main.c</div>
<svg class="a" style="left:300px;top:149px" width="12" height="14" viewBox="0 0 12 14" ><path d="M0.5 0.5H7.5L10.5 3.5V12.5H0.5Z" fill="#f4f7fc" stroke="#7a8290" stroke-width="1"/><path d="M7.5 0.5V3.5H10.5" fill="none" stroke="#9aa2ae" stroke-width="0.8"/><text x="3" y="11" font-family="Liberation Sans" font-size="10" font-weight="bold" fill="#3464b4">c</text><rect x="1.5" y="9.5" width="1.4" height="1.4" fill="#3464b4"/></svg>
<svg class="a" style="left:437px;top:151px" width="11" height="11" viewBox="0 0 11 11" ><path d="M0.5 2L2 0.5L5.5 4L9 0.5L10.5 2L7 5.5L10.5 9L9 10.5L5.5 7L2 10.5L0.5 9L4 5.5Z" fill="#fff" stroke="#7a7a7a" stroke-width="1" stroke-linejoin="round"/></svg>
<svg class="a" style="left:1386px;top:151px" width="10" height="5" viewBox="0 0 10 5" ><rect x="0.5" y="0.5" width="9" height="3" fill="#fff" stroke="#484848"/></svg>
<svg class="a" style="left:1409px;top:150px" width="10" height="10" viewBox="0 0 10 10" ><rect x="0.5" y="0.5" width="9" height="9" fill="#fff" stroke="#484848"/><path d="M0.5 2.5H9.5" stroke="#484848"/></svg>
<div class="a" style="left:293px;top:168px;width:1108px;height:424px;overflow:hidden;background:#fff">
<div class="a" style="left:0;top:0;width:11px;height:424px;background:#f8f8f8"></div>
<div class="code ln" style="left:0;width:34px;text-align:right;top:-3px;transform-origin:0 11px;transform:scaleY(1.14)">136</div>
<div class="code ln" style="left:0;width:34px;text-align:right;top:12px;transform-origin:0 11px;transform:scaleY(1.14)">137</div>
<div class="code" style="left:65px;top:12px;transform-origin:0 11px;transform:scaleY(1.14)"><span class="cm">/* Enable cache memory and MMU */</span></div>
<div class="code ln" style="left:0;width:34px;text-align:right;top:27px;transform-origin:0 11px;transform:scaleY(1.14)">138</div>
<div class="code" style="left:65px;top:27px;transform-origin:0 11px;transform:scaleY(1.14)"><span class="fn">MMUConfigAndEnable</span>();</div>
<div class="code ln" style="left:0;width:34px;text-align:right;top:42px;transform-origin:0 11px;transform:scaleY(1.14)">139</div>
<div class="code" style="left:65px;top:42px;transform-origin:0 11px;transform:scaleY(1.14)"><span class="fn">CACHEEnable</span>(CACHE_IDCACHE, CACHE_INNER_OUTER);</div>
<div class="code ln" style="left:0;width:34px;text-align:right;top:57px;transform-origin:0 11px;transform:scaleY(1.14)">140</div>
<div class="code ln" style="left:0;width:34px;text-align:right;top:72px;transform-origin:0 11px;transform:scaleY(1.14)">141</div>
<div class="code" style="left:65px;top:72px;transform-origin:0 11px;transform:scaleY(1.14)"><span class="cm">/*</span></div>
<div class="code ln" style="left:0;width:34px;text-align:right;top:87px;transform-origin:0 11px;transform:scaleY(1.14)">142</div>
<div class="code" style="left:65px;top:87px;transform-origin:0 11px;transform:scaleY(1.14)"><span class="cm"> * Initialize the global objects of use case and IP configuration</span></div>
<div class="code ln" style="left:0;width:34px;text-align:right;top:102px;transform-origin:0 11px;transform:scaleY(1.14)">143</div>
<div class="code" style="left:65px;top:102px;transform-origin:0 11px;transform:scaleY(1.14)"><span class="cm"> * data structures with default values.</span></div>
<div class="code ln" style="left:0;width:34px;text-align:right;top:117px;transform-origin:0 11px;transform:scaleY(1.14)">144</div>
<div class="code" style="left:65px;top:117px;transform-origin:0 11px;transform:scaleY(1.14)"><span class="cm"> */</span></div>
<div class="code ln" style="left:0;width:34px;text-align:right;top:132px;transform-origin:0 11px;transform:scaleY(1.14)">145</div>
<div class="code" style="left:65px;top:132px;transform-origin:0 11px;transform:scaleY(1.14)">gLedAppCfg  = GPIOAPPLEDCFG_DEFAULT;</div>
<div class="code ln" style="left:0;width:34px;text-align:right;top:147px;transform-origin:0 11px;transform:scaleY(1.14)">146</div>
<div class="code" style="left:65px;top:147px;transform-origin:0 11px;transform:scaleY(1.14)">gGpioAppCfg = GPIOAPPPINOBJ_DEFAULT;</div>
<div class="code ln" style="left:0;width:34px;text-align:right;top:162px;transform-origin:0 11px;transform:scaleY(1.14)">147</div>
<div class="code ln" style="left:0;width:34px;text-align:right;top:177px;transform-origin:0 11px;transform:scaleY(1.14)">148</div>
<div class="code" style="left:65px;top:177px;transform-origin:0 11px;transform:scaleY(1.14)">status = <span class="fn">BOARDInit</span>(NULL);</div>
<div class="code ln" style="left:0;width:34px;text-align:right;top:192px;transform-origin:0 11px;transform:scaleY(1.14)">149</div>
<div class="code ln" style="left:0;width:34px;text-align:right;top:207px;transform-origin:0 11px;transform:scaleY(1.14)">150</div>
<div class="code" style="left:65px;top:207px;transform-origin:0 11px;transform:scaleY(1.14)"><span class="cm">/* Initialize the UART console */</span></div>
<div class="code ln" style="left:0;width:34px;text-align:right;top:222px;transform-origin:0 11px;transform:scaleY(1.14)">151</div>
<div class="code" style="left:65px;top:222px;transform-origin:0 11px;transform:scaleY(1.14)"><span class="fn">CONSOLEUtilsInit</span>();</div>
<div class="code ln" style="left:0;width:34px;text-align:right;top:237px;transform-origin:0 11px;transform:scaleY(1.14)">152</div>
<div class="code ln" style="left:0;width:34px;text-align:right;top:252px;transform-origin:0 11px;transform:scaleY(1.14)">153</div>
<div class="code" style="left:65px;top:252px;transform-origin:0 11px;transform:scaleY(1.14)"><span class="cm">/* Select the console type based on compile time check */</span></div>
<div class="code ln" style="left:0;width:34px;text-align:right;top:267px;transform-origin:0 11px;transform:scaleY(1.14)">154</div>
<div class="code" style="left:65px;top:267px;transform-origin:0 11px;transform:scaleY(1.14)"><span class="fn">CONSOLEUtilsSetType</span>(<span class="it">CONSOLE_UTILS_TYPE_UART</span>);</div>
<div class="code ln" style="left:0;width:34px;text-align:right;top:282px;transform-origin:0 11px;transform:scaleY(1.14)">155</div>
<div class="code ln" style="left:0;width:34px;text-align:right;top:297px;transform-origin:0 11px;transform:scaleY(1.14)">156</div>
<div class="code" style="left:65px;top:297px;transform-origin:0 11px;transform:scaleY(1.14)"><span class="fn">CONSOLEUtilsPrintf</span>(<span class="st">"\n StarterWare GPIO Application!!\n"</span>);</div>
<div class="code ln" style="left:0;width:34px;text-align:right;top:312px;transform-origin:0 11px;transform:scaleY(1.14)">157</div>
<div class="code" style="left:65px;top:312px;transform-origin:0 11px;transform:scaleY(1.14)"><span class="fn">CONSOLEUtilsPrintf</span>(<span class="st">"BOARDInit status [0x%x]\n"</span>, status);</div>
<div class="code ln" style="left:0;width:34px;text-align:right;top:327px;transform-origin:0 11px;transform:scaleY(1.14)">158</div>
<div class="code ln" style="left:0;width:34px;text-align:right;top:342px;transform-origin:0 11px;transform:scaleY(1.14)">159</div>
<div class="code" style="left:65px;top:342px;transform-origin:0 11px;transform:scaleY(1.14)"><span class="cm">/* Print SoC &amp; Board Information. */</span></div>
<div class="code ln" style="left:0;width:34px;text-align:right;top:357px;transform-origin:0 11px;transform:scaleY(1.14)">160</div>
<div class="code" style="left:65px;top:357px;transform-origin:0 11px;transform:scaleY(1.14)"><span class="fn">SOCPrintInfo</span>();</div>
<div class="code ln" style="left:0;width:34px;text-align:right;top:372px;transform-origin:0 11px;transform:scaleY(1.14)">161</div>
<div class="code" style="left:65px;top:372px;transform-origin:0 11px;transform:scaleY(1.14)"><span class="fn">BOARDPrintInfo</span>();</div>
<div class="code ln" style="left:0;width:34px;text-align:right;top:387px;transform-origin:0 11px;transform:scaleY(1.14)">162</div>
<div class="code ln" style="left:0;width:34px;text-align:right;top:402px;transform-origin:0 11px;transform:scaleY(1.14)">163</div>
<div class="code" style="left:65px;top:402px;transform-origin:0 11px;transform:scaleY(1.14)"><span class="cm">/* Get board info */</span></div>
<div class="code ln" style="left:0;width:34px;text-align:right;top:417px;transform-origin:0 11px;transform:scaleY(1.14)">164</div>
<div class="code" style="left:65px;top:417px;transform-origin:0 11px;transform:scaleY(1.14)">status = <span class="fn">GpioAppBoardInfoGet</span>(&amp;gGpioAppCfg);</div>
</div>
<div class="a" style="left:1401px;top:168px;width:15px;height:424px;background:linear-gradient(90deg,#e4e4e4,#efefef 30%,#eeeeee)"></div>
<div class="a" style="left:1416px;top:168px;width:12px;height:440px;background:#f6f6f6"></div>
<svg class="a" style="left:1406px;top:175px" width="7" height="4" viewBox="0 0 7 4" ><path d="M0 4L3.5 0L7 4Z" fill="#222"/></svg>
<svg class="a" style="left:1406px;top:581px" width="7" height="4" viewBox="0 0 7 4" ><path d="M0 0H7L3.5 4Z" fill="#222"/></svg>
<div class="a" style="left:1401px;top:385px;width:15px;height:40px;border:1px solid #8c8c8c;border-radius:2px;background:linear-gradient(90deg,#fbfbfb,#ececec 50%,#d8d8d8)"></div>
<div class="a" style="left:1405px;top:401px;width:6px;height:1px;background:#333;box-shadow:0 3px 0 #333,0 6px 0 #333"></div>
<div class="a" style="left:293px;top:592px;width:35px;height:16px;background:#f8f8f8"></div>
<div class="a" style="left:328px;top:592px;width:1072px;height:16px;background:linear-gradient(#e2e2e2,#eeeeee 30%,#ededed)"></div>
<div class="a" style="left:1400px;top:592px;width:28px;height:16px;background:#f4f4f4"></div>
<svg class="a" style="left:336px;top:596px" width="4" height="7" viewBox="0 0 4 7" ><path d="M4 0V7L0 3.5Z" fill="#777"/></svg>
<svg class="a" style="left:1390px;top:596px" width="4" height="7" viewBox="0 0 4 7" ><path d="M0 0V7L4 3.5Z" fill="#666"/></svg>
<div class="a" style="left:287px;top:608px;width:1141px;height:6px;background:#e6e6e8;border-top:1px solid #fbfcf8"></div>
<div class="panel" style="left:292px;top:614px;width:1137px;height:176px;border-color:#bcbec8;border-radius:4px 0 0 0">
<div class="strip" style="border-radius:4px 0 0 0;height:25px;background:linear-gradient(#e8eaf7,#dde2f1 40%,#d6dcee);border-bottom:1px solid #b0b4c2"></div><div class="tab" style="width:104px;height:25px;border-radius:4px 4px 0 0;border-right:1px solid #b0b4c2"></div>
<div class="a" style="left:1px;top:42px;right:0;height:25px;background:linear-gradient(#f7fbfd,#eef7fb 45%,#dcf0f9 55%,#d6edf8);border-top:1px solid #8f8f8f;border-bottom:1px solid #a6d8ea"></div>
<div class="a" style="left:1px;top:67px;right:0;bottom:0;background:#f5f5f5;border-left:1px solid #fff"></div>
<div class="a" style="left:2px;top:87px;right:0;height:1px;background:#e2e2e2"></div>
<div class="a" style="left:2px;top:107px;right:0;height:1px;background:#e2e2e2"></div>
<div class="a" style="left:2px;top:127px;right:0;height:1px;background:#e2e2e2"></div>
<div class="a" style="left:2px;top:147px;right:0;height:1px;background:#e2e2e2"></div>
<div class="a" style="left:2px;top:167px;right:0;height:1px;background:#e2e2e2"></div>
</div>
<div class="t" style="left:317.2px;top:622px;font-size:13px;font-weight:400;color:#000;letter-spacing:-0.028px;">Problems</div>
<div class="t" style="left:293.6px;top:642px;font-size:13px;font-weight:400;color:#000;letter-spacing:0.15px;">1 error, 0 warnings, 0 others</div>
<div class="t" style="left:299.6px;top:664px;font-size:13px;font-weight:400;color:#000;letter-spacing:0.13px;">Description</div>
<div class="t" style="left:336.4px;top:686px;font-size:13px;font-weight:400;color:#000;letter-spacing:0.129px;">Errors (1 item)</div>
<div class="t" style="left:356.0px;top:706px;font-size:13px;font-weight:400;color:#000;letter-spacing:0.209px;">Cannot build project. Referenced project 'board' contains build-errors.</div>
<svg class="a" style="left:297px;top:620px" width="15" height="16" viewBox="0 0 15 16" ><path d="M0.5 7V0.5H12" fill="none" stroke="#606868" stroke-width="1"/><path d="M8.5 1.5H12.5L13.5 3.5V7L12 8.5L13.5 14H8.5Z" fill="#e8eef8" stroke="#a8b4c4" stroke-width="0.9"/><path d="M8 14.5H14" stroke="#4e5a64" stroke-width="1.2"/><circle cx="6" cy="4.3" r="2.4" fill="#d83a3a"/><rect x="0" y="8" width="7" height="8" fill="#d23c44"/><path d="M1.8 10L5.2 14M5.2 10L1.8 14" stroke="#fff" stroke-width="1.2"/></svg>
<svg class="a" style="left:379px;top:623px" width="11" height="11" viewBox="0 0 11 11" ><path d="M0.5 2L2 0.5L5.5 4L9 0.5L10.5 2L7 5.5L10.5 9L9 10.5L5.5 7L2 10.5L0.5 9L4 5.5Z" fill="#fff" stroke="#5a5a5a" stroke-width="1" stroke-linejoin="round"/></svg>
<svg class="a" style="left:1366px;top:622px" width="10" height="6" viewBox="0 0 10 6" ><path d="M0.5 0.5H9.5L5 5.5Z" fill="#fff" stroke="#4a4a4a"/></svg>
<svg class="a" style="left:1386px;top:622px" width="10" height="5" viewBox="0 0 10 5" ><rect x="0.5" y="0.5" width="9" height="3" fill="#fff" stroke="#484848"/></svg>
<svg class="a" style="left:1409px;top:622px" width="10" height="10" viewBox="0 0 10 10" ><rect x="0.5" y="0.5" width="9" height="9" fill="#fff" stroke="#484848"/><path d="M0.5 2.5H9.5" stroke="#484848"/></svg>
<svg class="a" style="left:935px;top:660px" width="7" height="5" viewBox="0 0 7 5" ><defs><linearGradient id="sa" x1="0" x2="1"><stop offset="0" stop-color="#2e3a46"/><stop offset="1" stop-color="#a8bcc8"/></linearGradient></defs><path d="M0 4L3.5 0L7 4Z" fill="url(#sa)"/></svg>
<svg class="a" style="left:303px;top:690px" width="6" height="6" viewBox="0 0 6 6" ><path d="M6 0V6H0Z" fill="#3a3a3a"/></svg>
<svg class="a" style="left:319px;top:686px" width="12" height="12" viewBox="0 0 12 12" ><defs><radialGradient id="er" cx="0.4" cy="0.35" r="0.7"><stop offset="0" stop-color="#f07a80"/><stop offset="1" stop-color="#c82a38"/></radialGradient></defs><circle cx="5.6" cy="5.6" r="5.3" fill="url(#er)" stroke="#b83040" stroke-width="0.5"/><path d="M3.6 3.2L7.6 8M7.6 3.2L3.6 8" stroke="#fff" stroke-width="1.1"/></svg>
<svg class="a" style="left:338px;top:706px" width="12" height="12" viewBox="0 0 12 12" ><defs><radialGradient id="er" cx="0.4" cy="0.35" r="0.7"><stop offset="0" stop-color="#f07a80"/><stop offset="1" stop-color="#c82a38"/></radialGradient></defs><circle cx="5.6" cy="5.6" r="5.3" fill="url(#er)" stroke="#b83040" stroke-width="0.5"/><path d="M3.6 3.2L7.6 8M7.6 3.2L3.6 8" stroke="#fff" stroke-width="1.1"/></svg></body></html>
